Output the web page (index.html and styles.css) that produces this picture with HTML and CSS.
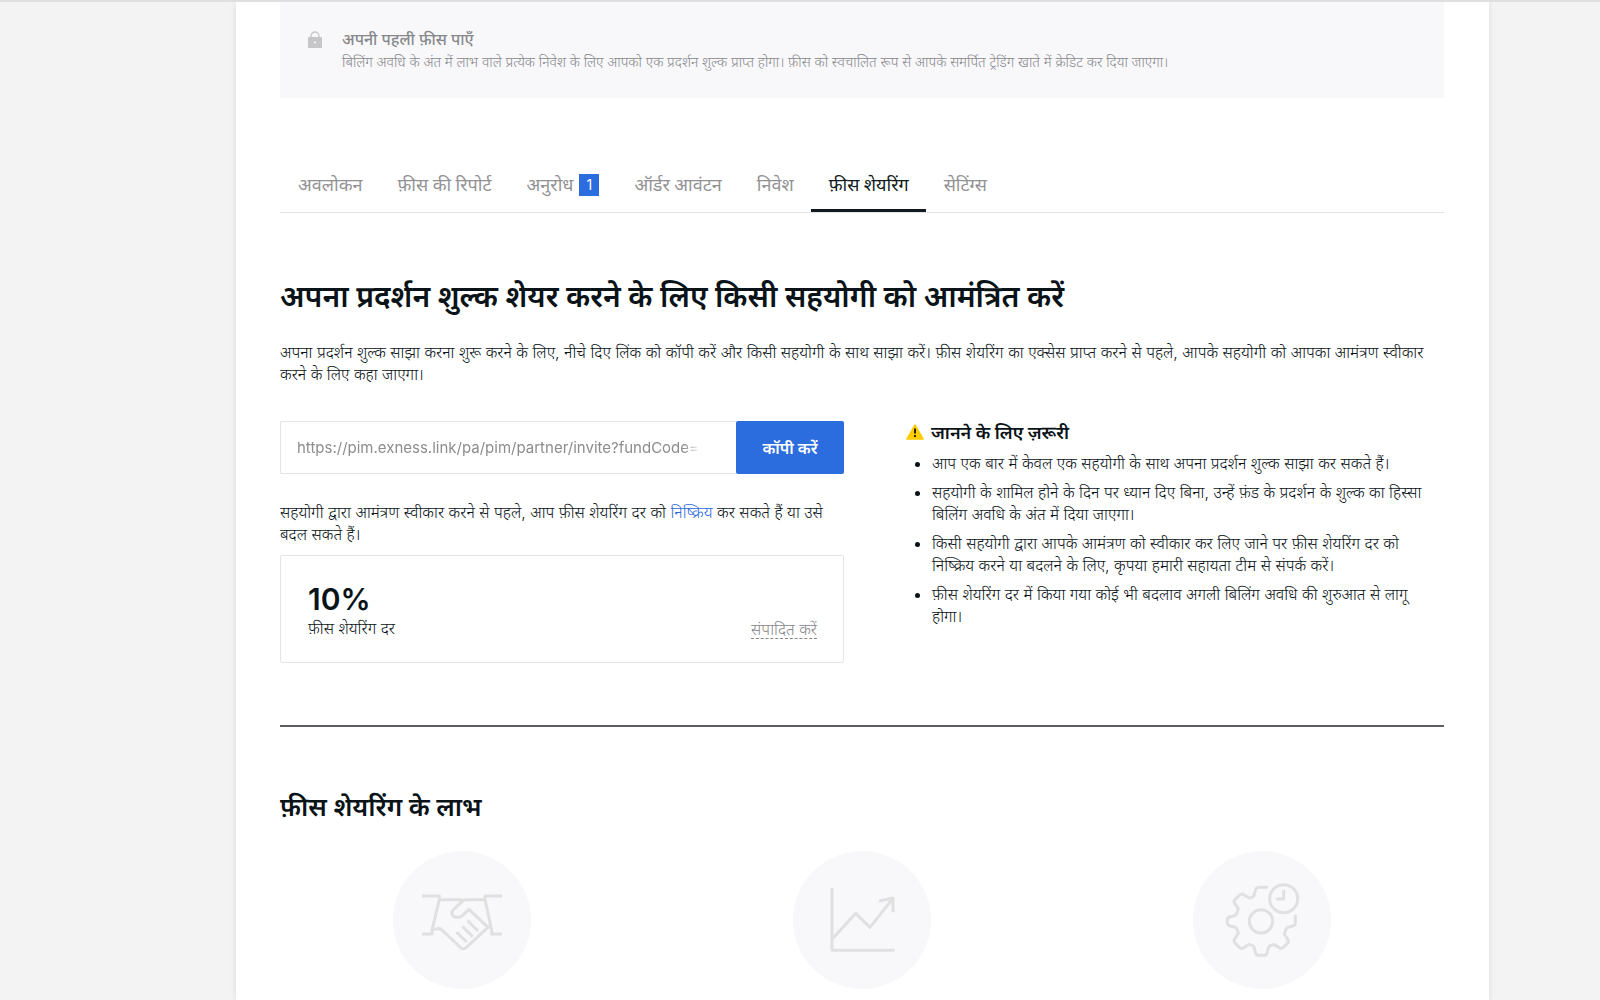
FILE: index.html
```html
<!doctype html>
<html lang="hi">
    <head>
        <meta charset="UTF-8" />
        <meta name="viewport" content="width=device-width, initial-scale=1.0" />
        <title>फ़ीस शेयरिंग</title>
        <link rel="stylesheet" href="styles.css">
    </head>
    <body>
        <main class="page">
            <section class="step">
                <svg class="step-icon" viewBox="0 0 14 18" aria-hidden="true">
                    <path d="M3 8V5a4 4 0 0 1 8 0v3" fill="none" stroke="#c6c6c8" stroke-width="1.3" />
                    <rect x="0" y="6" width="14" height="11" rx="1" fill="#c6c6c8" />
                    <circle cx="7" cy="11.5" r="1" fill="#fff" />
                </svg>
                <div>
                    <h3 class="step-title">अपनी पहली फ़ीस पाएँ</h3>
                    <p class="step-text">बिलिंग अवधि के अंत में लाभ वाले प्रत्येक निवेश के लिए आपको एक प्रदर्शन शुल्क प्राप्त होगा। फ़ीस को स्वचालित रूप से आपके समर्पित ट्रेडिंग खाते में क्रेडिट कर दिया जाएगा।</p>
                </div>
            </section>

            <nav class="tabs">
                <a href="#overview" class="tab">अवलोकन</a>
                <a href="#report" class="tab">फ़ीस की रिपोर्ट</a>
                <a href="#requests" class="tab">अनुरोध <span class="badge">1</span></a>
                <a href="#orders" class="tab">ऑर्डर आवंटन</a>
                <a href="#investments" class="tab">निवेश</a>
                <a href="#sharing" class="tab active" aria-current="page">फ़ीस शेयरिंग</a>
                <a href="#settings" class="tab">सेटिंग्स</a>
            </nav>

            <h1>अपना प्रदर्शन शुल्क शेयर करने के लिए किसी सहयोगी को आमंत्रित करें</h1>
            <p class="intro">अपना प्रदर्शन शुल्क साझा करना शुरू करने के लिए, नीचे दिए लिंक को कॉपी करें और किसी सहयोगी के साथ साझा करें। फ़ीस शेयरिंग का एक्सेस प्राप्त करने से पहले, आपके सहयोगी को आपका आमंत्रण स्वीकार करने के लिए कहा जाएगा।</p>

            <div class="columns">
                <div class="invite">
                    <div class="copy-row">
                        <div class="link-box">
                            <input class="link-input" type="text" aria-label="आमंत्रण लिंक" value="https://pim.exness.link/pa/pim/partner/invite?fundCode=" readonly />
                        </div>
                        <button type="button" class="copy-btn">कॉपी करें</button>
                    </div>
                    <p class="note">सहयोगी द्वारा आमंत्रण स्वीकार करने से पहले, आप फ़ीस शेयरिंग दर को <a href="#disable">निष्क्रिय</a> कर सकते हैं या उसे बदल सकते हैं।</p>
                    <div class="rate">
                        <div>
                            <div class="rate-value">10%</div>
                            <div class="rate-label">फ़ीस शेयरिंग दर</div>
                        </div>
                        <button type="button" class="edit-btn">संपादित करें</button>
                    </div>
                </div>

                <aside class="info">
                    <h3 class="info-title">
                        <svg class="warn" viewBox="0 0 18 16" aria-hidden="true">
                            <path d="M9 1.2 17 15H1z" fill="#fc0" stroke="#fc0" stroke-width="1.6" stroke-linejoin="round" />
                            <path d="M9 4.5v5M9 11v2" stroke="#2b2410" stroke-width="2" />
                        </svg>
                        जानने के लिए ज़रूरी
                    </h3>
                    <ul>
                        <li>आप एक बार में केवल एक सहयोगी के साथ अपना प्रदर्शन शुल्क साझा कर सकते हैं।</li>
                        <li>सहयोगी के शामिल होने के दिन पर ध्यान दिए बिना, उन्हें फ़ंड के प्रदर्शन के शुल्क का हिस्सा बिलिंग अवधि के अंत में दिया जाएगा।</li>
                        <li>किसी सहयोगी द्वारा आपके आमंत्रण को स्वीकार कर लिए जाने पर फ़ीस शेयरिंग दर को निष्क्रिय करने या बदलने के लिए, कृपया हमारी सहायता टीम से संपर्क करें।</li>
                        <li>फ़ीस शेयरिंग दर में किया गया कोई भी बदलाव अगली बिलिंग अवधि की शुरुआत से लागू होगा।</li>
                    </ul>
                </aside>
            </div>

            <hr>

            <h2>फ़ीस शेयरिंग के लाभ</h2>
            <div class="benefits">
                <!-- handshake -->
                <svg class="benefit" viewBox="9 8 414 414" aria-hidden="true">
                    <circle cx="216" cy="215" r="207" />
                    <path d="M96 143H148V154L126 245V257H96M336 143H285V154L305 245V257H336" />
                    <path d="M148 154H218M285 154H228Q221 154 217 159L190 184Q181 194 190 204Q195 207 203 207Q212 207 218 201L237 183L294 237L227 299Q220 304 213 299L158 247Q151 240 143 241L128 243M294 237L301 233M233 217L264 248M217 234L248 265M199 251L230 281" />
                </svg>
                <!-- growth chart -->
                <svg class="benefit" viewBox="9 8 414 414" aria-hidden="true">
                    <circle cx="216" cy="215" r="207" />
                    <path d="M126 119V306H314M129 270L197 195L240 237L308 151M267 158L309 149V192" />
                </svg>
                <!-- gear with clock -->
                <svg class="benefit" viewBox="9 8 414 414" aria-hidden="true">
                    <circle cx="216" cy="215" r="207" />
                    <circle class="line" cx="213" cy="219" r="35" />
                    <circle class="line" cx="281" cy="151" r="42" />
                    <path stroke-linecap="round" d="M230 117H207Q198 117 196 127L192 141Q190 146 185 147L178 149L161 139Q155 135 149 140L135 154Q130 159 134 165L145 181L140 196Q138 201 133 202L120 205Q112 207 112 215V224Q112 231 120 233L134 236Q139 238 141 243L145 255L134 272Q130 278 135 284L149 298Q155 302 161 298L177 288L187 291Q192 293 193 299L197 314Q198 321 206 321H222Q230 321 231 314L235 299Q236 294 241 292L251 288L268 298Q274 302 280 297L293 284Q297 279 293 273L283 257L288 243Q289 239 294 237L308 233Q316 231 316 224V202" />
                    <path d="M281 124V152H259" />
                </svg>
            </div>
        </main>
    </body>
</html>
```
FILE: styles.css
```css
* {
    box-sizing: border-box;
    margin: 0;
    padding: 0;
}

body {
    font-family: Inter, "Noto Sans Devanagari", "Noto Sans", sans-serif;
    font-size: 16px;
    font-weight: 300;
    line-height: 22px;
    color: #0a1318;
    background-color: #f3f3f4;
    border-top: 2px solid #dfdfdf;
    padding: 0 111px 0 236px;
}

h1,
h2,
h3 {
    font-family: Lato, "Noto Sans Devanagari", "Noto Sans", sans-serif;
    font-weight: 600;
}

.page {
    background-color: #fff;
    padding: 0 45px 12px 44px;
    box-shadow: 0 0 6px rgba(0, 0, 0, 0.1);
}

.step {
    display: flex;
    gap: 20px;
    padding: 26px 28px 25px;
    background-color: #f8f8fb;
    color: #88888b;
}

.step-icon {
    width: 14px;
    height: 18px;
    margin-top: 3px;
}

.step-title {
    font-size: 16px;
    font-weight: 500;
}

.step-text {
    margin-top: 1px;
    font-family: Lato, "Noto Sans Devanagari", "Noto Sans", sans-serif;
    font-size: 14px;
}

.tabs {
    display: flex;
    height: 61px;
    margin-top: 54px;
    border-bottom: 1px solid #e4e4e6;
}

.tab {
    display: flex;
    align-items: center;
    gap: 6px;
    padding: 8px 17px 0 18px;
    font-family: Roboto, "Noto Sans Devanagari", "Noto Sans", sans-serif;
    font-size: 18px;
    font-weight: 400;
    color: #929295;
    text-decoration: none;
    border-bottom: 3px solid transparent;
}

.active {
    color: #101a20;
    border-bottom-color: #101a20;
}

.badge {
    width: 20px;
    background-color: #2b6cde;
    color: #fff;
    font-family: Inter, sans-serif;
    font-size: 14px;
    text-align: center;
}

h1 {
    margin: 60px 0 24px;
    font-size: 30px;
    line-height: 44px;
}

.columns {
    display: grid;
    grid-template-columns: 1fr 1fr;
    gap: 36px;
    margin-top: 36px;
}

.copy-row {
    display: flex;
    height: 53px;
}

.link-box {
    flex: 1;
    border: 1px solid #e4e4e6;
    border-right: none;
    border-radius: 2px 0 0 2px;
}

/* the link fades out before the button */
.link-input {
    width: 100%;
    height: 100%;
    padding: 0 16px;
    border: none;
    font: 15px Inter, sans-serif;
    color: #8d8d90;
    background: none;
    outline: none;
    mask-image: linear-gradient(to left, transparent 36px, #000 52px);
}

.copy-btn {
    width: 108px;
    border: none;
    border-radius: 2px;
    background-color: #2b6cde;
    color: #fff;
    font: inherit;
    font-weight: 600;
    cursor: pointer;
}

.note {
    margin: 27px 0 10px;
}

.note a {
    color: #2b6cde;
    text-decoration: none;
}

.rate {
    display: flex;
    justify-content: space-between;
    align-items: flex-end;
    padding: 25px 26px 23px 27px;
    border: 1px solid #e4e4e6;
    border-radius: 2px;
}

.rate-value {
    font-size: 30px;
    font-weight: 600;
    line-height: 36px;
}

.edit-btn {
    border: none;
    border-bottom: 1px dashed #88888b;
    background: none;
    font: inherit;
    line-height: 18px;
    color: #88888b;
    cursor: pointer;
}

.info {
    padding: 0 12px 0 26px;
}

.info-title {
    display: flex;
    align-items: center;
    gap: 7px;
    font-size: 18px;
}

.warn {
    width: 18px;
    height: 16px;
}

.info ul {
    padding-left: 26px;
    margin-top: 9px;
}

.info li {
    margin-bottom: 7px;
}

hr {
    margin: 62px 0 57px;
    border: none;
    border-top: 2px solid #5c5d62;
}

h2 {
    font-size: 26px;
    line-height: 44px;
}

.benefits {
    display: grid;
    grid-template-columns: repeat(3, 1fr);
    gap: 36px;
    justify-items: center;
    margin-top: 23px;
}

.benefit {
    width: 138px;
    height: 138px;
}

.benefit circle {
    fill: #f8f8fb;
}

.benefit path,
.benefit .line {
    fill: none;
    stroke: #e0e0e1;
    stroke-width: 9;
    stroke-linejoin: round;
}
```
